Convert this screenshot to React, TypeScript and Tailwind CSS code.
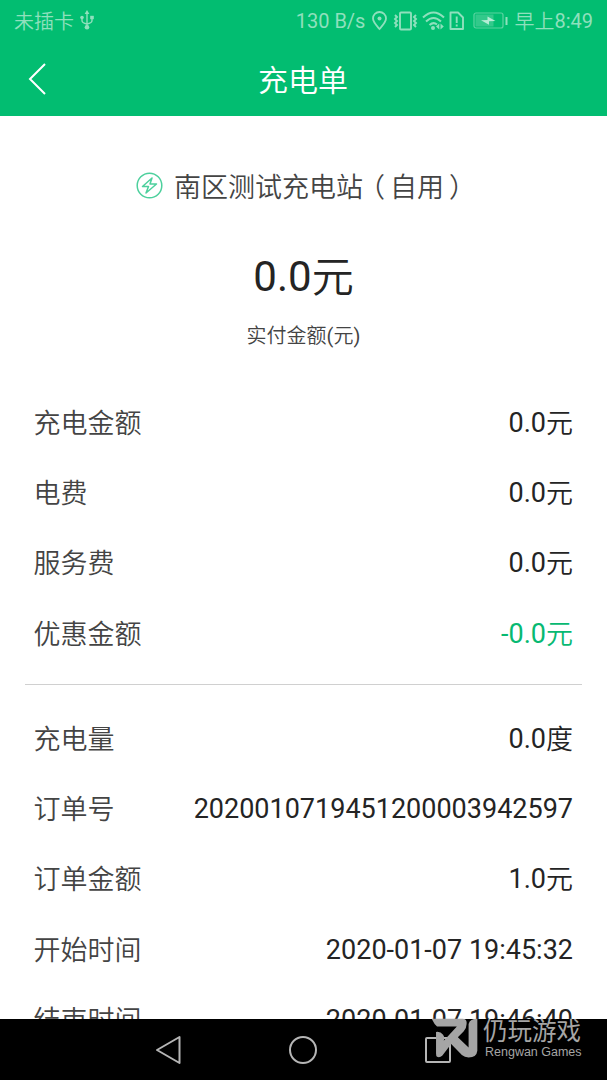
import React from "react";

const fees = [
  { label: "充电金额", value: "0.0", unit: "元" },
  { label: "电费", value: "0.0", unit: "元" },
  { label: "服务费", value: "0.0", unit: "元" },
  { label: "优惠金额", value: "-0.0", unit: "元", discount: true },
];

const details = [
  { label: "充电量", value: "0.0", unit: "度" },
  { label: "订单号", value: "2020010719451200003942597" },
  { label: "订单金额", value: "1.0", unit: "元" },
  { label: "开始时间", value: "2020-01-07 19:45:32" },
  { label: "结束时间", value: "2020-01-07 19:46:40" },
];

const StatusBar = () => {
  return (
    <div className="flex h-[41px] items-center justify-between pl-3.5 pr-[14px] text-xl text-[#8fe0bd]">
      <div className="flex items-center gap-[6px]">
        <span className="pt-0.5 font-[350]">未插卡</span>
        <svg className="mb-0.5" width="14" height="20" viewBox="0 0 14 20" fill="none" stroke="currentColor" strokeWidth="1.4">
          <path d="M7 3v14M2 8v2.5q0 2.5 5 3.5M12 8v2.5q0 2.5-5 3.5" />
          <path d="M7 0l2.4 4H4.6z" fill="currentColor" stroke="none" />
          <circle cx="2" cy="7.5" r="1.8" fill="currentColor" stroke="none" />
          <rect x="10.2" y="5.8" width="3.6" height="3.4" fill="currentColor" stroke="none" />
          <circle cx="7" cy="17.3" r="2.3" fill="currentColor" stroke="none" />
        </svg>
      </div>
      <div className="flex items-center">
        <span>130 B/s</span>
        <svg className="ml-[7px]" width="15" height="20" viewBox="0 0 15 20" fill="none" stroke="currentColor" strokeWidth="1.8">
          <path d="M7.5 18C4 14 1 11 1 7.5a6.5 6.5 0 0 1 13 0C14 11 11 14 7.5 18z" />
          <circle cx="7.5" cy="7.5" r="2" fill="currentColor" stroke="none" />
        </svg>
        <svg className="ml-[6px]" width="25" height="20" viewBox="0 0 25 20" fill="none" stroke="currentColor" strokeWidth="1.9">
          <rect x="7" y="1.5" width="11" height="17" rx="1" />
          <path d="M2 4l2 2-2 2 2 2-2 2 2 2-2 2M23 4l-2 2 2 2-2 2 2 2-2 2 2 2" />
        </svg>
        <svg className="ml-[4px]" width="23" height="20" viewBox="0 0 23 20" fill="none" stroke="currentColor" strokeWidth="2">
          <path d="M1 6.5q10.5-10 21 0M4 10.5q7.5-7 15 0M7.500 14q4-3.500 7.500-.5" />
          <circle cx="11" cy="17" r="2" fill="currentColor" stroke="none" />
          <path d="M17.300 12.500v6L14 15.500zM18.500 12.500v6l3.300-3z" fill="currentColor" stroke="none" />
        </svg>
        <svg className="ml-[4px]" width="15" height="20" viewBox="0 0 15 20" fill="none" stroke="currentColor" strokeWidth="1.9">
          <path d="M1.500 1.500h7.500L14 6.500V18H1.500z" strokeLinejoin="round" />
          <path d="M7.700 5.500v6.500M7.700 13.500v2" />
        </svg>
        <svg className="ml-[9px]" width="36" height="20" viewBox="0 0 36 20" fill="none">
          <rect x="1" y="2" width="29" height="15" rx="2" stroke="currentColor" strokeOpacity=".65" strokeWidth="1.2" />
          <rect x="2.5" y="3.5" width="18" height="12" fill="currentColor" fillOpacity=".35" />
          <path d="M8 9.200l6.500-.2V5.500L22.500 10l-6.500.300v3.500z" fill="#b5ecd5" />
          <path d="M33.500 6v8" stroke="currentColor" strokeWidth="2" />
        </svg>
        <span className="ml-[5px] flex items-center">
          <span className="pt-0.5 font-[350]">早上</span>
          <span>8:49</span>
        </span>
      </div>
    </div>
  );
};

const Row = ({ label, value, unit = "", discount = false }) => {
  return (
    <div className="flex h-[70.3px] shrink-0 items-center justify-between pl-[33.5px] pr-[34px] text-[27px] leading-none">
      <span className="pt-0.5 font-[350] text-[#444]">{label}</span>
      <span
        className={`flex items-center ${
          discount ? "text-[#07b972]" : "text-[#242424]"
        }`}
      >
        <span>{value}</span>
        {unit && <span className="pt-0.5 font-[350]">{unit}</span>}
      </span>
    </div>
  );
};

const Watermark = () => {
  return (
    <div className="absolute left-[431px] top-[1017px] flex text-[#a5a5a5]">
      <svg className="mt-px" width="47" height="40" viewBox="18 25 140 118" fill="currentColor">
        <path d="M20 27H112Q126 27 124 42Q124 55 115 65L98 82L130 112V42Q134 27 156 27V122Q154 142 130 142Q118 142 110 135L78 102L52 136Q44 144 36 140Q33 138 33 130V66Q46 64 54 74Q60 82 56 92L95 50H36Q28 44 20 27Z" />
      </svg>
      <div className="ml-[5px]">
        <div className="pt-px text-[24.5px] leading-[27px]">仍玩游戏</div>
        <div className="ml-0.5 text-[12.5px] leading-[14px] font-['Liberation_Sans',sans-serif]">
          Rengwan Games
        </div>
      </div>
    </div>
  );
};

export default function App() {
  return (
    <div className="relative flex h-[1080px] w-[607px] flex-col overflow-hidden bg-white font-['Roboto','Noto_Sans_CJK_SC',sans-serif]">
      <header className="h-[116px] shrink-0 bg-[#02bd71]">
        <StatusBar />
        <div className="grid h-[75px] grid-cols-[60px_1fr_61px] items-center text-white">
          <svg className="ml-7" width="20" height="34" viewBox="0 0 20 34" fill="none" stroke="currentColor" strokeWidth="2">
            <path d="M17 2L2 17l15 15" />
          </svg>
          <h1 className="pt-[3px] text-center text-[30px] font-[350]">充电单</h1>
        </div>
      </header>

      <main className="flex flex-1 flex-col overflow-hidden">
        <div className="flex h-[272px] shrink-0 flex-col items-center pt-[51px]">
          <div className="flex h-10 items-center gap-[11px] text-[27px] font-[350] whitespace-nowrap text-[#444]">
            <svg className="mb-[4px] shrink-0" width="27" height="27" viewBox="0 0 27 27" fill="none" stroke="#4dd09d" strokeWidth="1.5">
              <circle cx="13.5" cy="13.5" r="12.3" />
              <path d="M16 6l-9.500 8.500h6l-2.500 6.500L20.500 12h-6.500z" strokeLinejoin="round" />
            </svg>
            <span className="pt-0.5">
              南区测试充电站
              <span className="-ml-[5px] mr-[5px]">（</span>
              自用
              <span className="ml-[5px] -mr-[5px]">）</span>
            </span>
          </div>
          <div className="mt-[40px] flex text-[42px] leading-[60px] text-[#242424]">
            <span>0.0</span>
            <span className="pt-px font-[350]">元</span>
          </div>
          <div className="mt-[14px] text-xl font-[350] text-[#444]">
            实付金额<span className="font-normal">(</span>元
            <span className="font-normal">)</span>
          </div>
        </div>

        {fees.map((row) => (
          <Row key={row.label} {...row} />
        ))}
        <hr className="mx-[25px] mt-[15px] mb-[19px] shrink-0 border-[#d0d0d0]" />
        {details.map((row) => (
          <Row key={row.label} {...row} />
        ))}
      </main>

      <nav className="flex h-[61px] shrink-0 items-center justify-between bg-black pl-[154px] pr-[155px] text-[#b5b5b5]">
        <svg width="28" height="30" viewBox="0 0 28 30" fill="none" stroke="currentColor" strokeWidth="2">
          <path d="M25.500 2v26L3 15z" strokeLinejoin="round" />
        </svg>
        <svg width="30" height="30" viewBox="0 0 30 30" fill="none" stroke="currentColor" strokeWidth="2">
          <circle cx="15" cy="15" r="13" />
        </svg>
        <svg width="28" height="28" viewBox="0 0 28 28" fill="none" stroke="currentColor" strokeWidth="2">
          <rect x="2" y="2" width="24" height="24" rx="1" />
        </svg>
      </nav>

      <Watermark />
    </div>
  );
}
